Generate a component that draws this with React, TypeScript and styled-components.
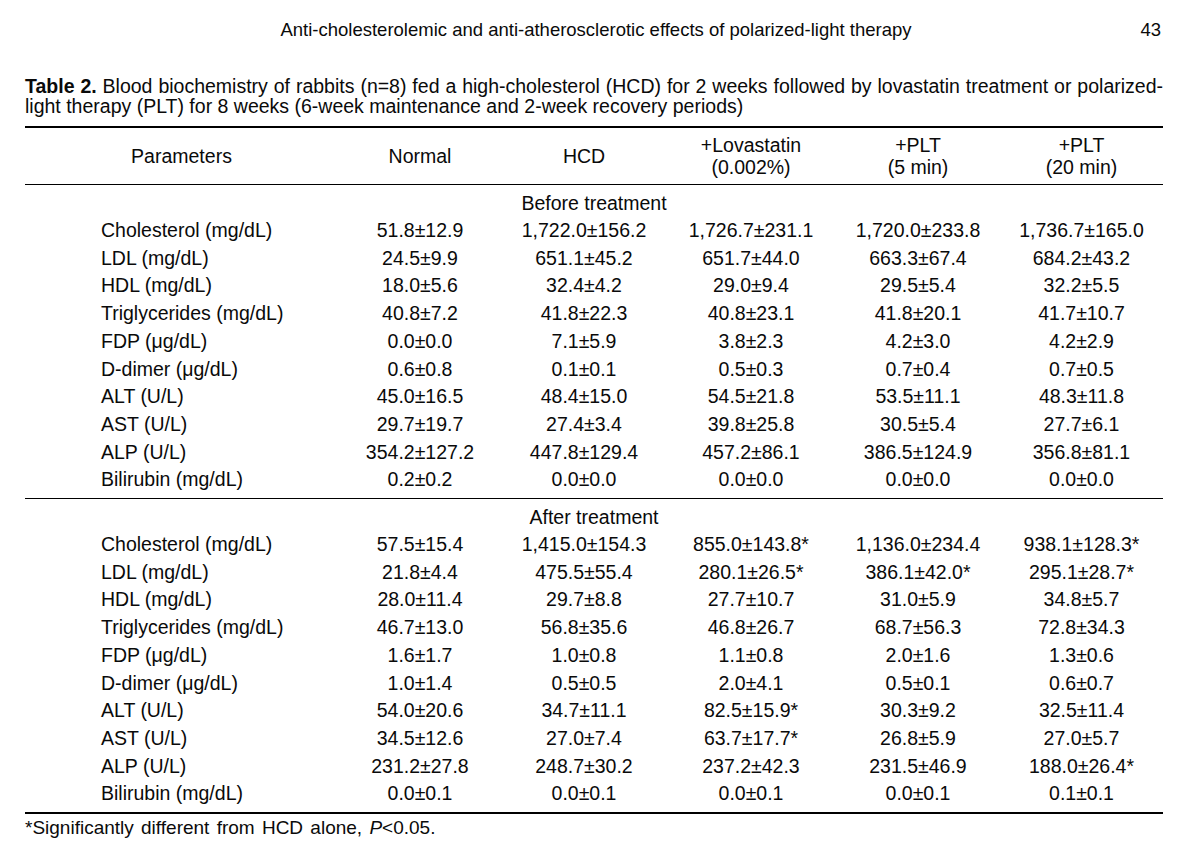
import React from "react";
import styled, { createGlobalStyle } from "styled-components";

const GlobalStyle = createGlobalStyle`
  html, body {
    margin: 0;
    padding: 0;
    background: #ffffff;
  }
  body {
    font-family: "Liberation Sans", Arial, sans-serif;
    color: #0a0a0a;
  }
`;

const Page = styled.div`
  width: 1138px;
  padding: 19px 25px 0 25px;
  font-size: 19.5px;
`;

const RunningHead = styled.header`
  display: grid;
  grid-template-columns: 1fr auto 1fr;
  align-items: center;
  line-height: 22px;
  font-size: 18.5px;
`;

const HeadTitle = styled.span`
  grid-column: 2;
  padding-left: 4px;
`;

const PageNumber = styled.span`
  grid-column: 3;
  justify-self: end;
  padding-right: 2px;
`;

const Caption = styled.div`
  margin-top: 35px;
  line-height: 20px;
`;

const CaptionLine = styled.span<{ $justify?: boolean }>`
  display: block;
  text-align: ${(p) => (p.$justify ? "justify" : "left")};
  text-align-last: ${(p) => (p.$justify ? "justify" : "left")};
`;

const Strong = styled.b`
  font-weight: 700;
`;

const Table = styled.table`
  margin-top: 10px;
  width: 1138px;
  border-collapse: collapse;
  table-layout: fixed;
  border-top: 2.5px solid #000;
  border-bottom: 2.5px solid #000;
`;

const HeadRow = styled.tr`
  border-bottom: 1.3px solid #000;
`;

const HeadCell = styled.th`
  font-weight: 400;
  text-align: center;
  vertical-align: middle;
  height: 56px;
  padding: 0;
  line-height: 22px;
`;

const Section = styled.tbody<{ $divided?: boolean }>`
  border-bottom: ${(p) => (p.$divided ? "1.3px solid #000" : "none")};
`;

const GroupCell = styled.td`
  text-align: center;
  padding: 4px 0 0 0;
  line-height: 28px;
`;

const Row = styled.tr<{ $last?: boolean }>`
  & > td {
    padding-bottom: ${(p) => (p.$last ? "4px" : "0")};
  }
`;

const ParamCell = styled.td`
  padding: 0 0 0 76px;
  line-height: 27.7px;
  text-align: left;
  white-space: nowrap;
`;

const ValueCell = styled.td`
  padding: 0;
  line-height: 27.7px;
  text-align: center;
  white-space: nowrap;
`;

const Footnote = styled.p`
  margin: 3px 0 0 0;
  line-height: 22px;
  font-size: 19px;
  word-spacing: 2px;
`;

type DataRow = [string, string, string, string, string, string];

const before: DataRow[] = [
  ["Cholesterol (mg/dL)", "51.8±12.9", "1,722.0±156.2", "1,726.7±231.1", "1,720.0±233.8", "1,736.7±165.0"],
  ["LDL (mg/dL)", "24.5±9.9", "651.1±45.2", "651.7±44.0", "663.3±67.4", "684.2±43.2"],
  ["HDL (mg/dL)", "18.0±5.6", "32.4±4.2", "29.0±9.4", "29.5±5.4", "32.2±5.5"],
  ["Triglycerides (mg/dL)", "40.8±7.2", "41.8±22.3", "40.8±23.1", "41.8±20.1", "41.7±10.7"],
  ["FDP (μg/dL)", "0.0±0.0", "7.1±5.9", "3.8±2.3", "4.2±3.0", "4.2±2.9"],
  ["D-dimer (μg/dL)", "0.6±0.8", "0.1±0.1", "0.5±0.3", "0.7±0.4", "0.7±0.5"],
  ["ALT (U/L)", "45.0±16.5", "48.4±15.0", "54.5±21.8", "53.5±11.1", "48.3±11.8"],
  ["AST (U/L)", "29.7±19.7", "27.4±3.4", "39.8±25.8", "30.5±5.4", "27.7±6.1"],
  ["ALP (U/L)", "354.2±127.2", "447.8±129.4", "457.2±86.1", "386.5±124.9", "356.8±81.1"],
  ["Bilirubin (mg/dL)", "0.2±0.2", "0.0±0.0", "0.0±0.0", "0.0±0.0", "0.0±0.0"],
];

const after: DataRow[] = [
  ["Cholesterol (mg/dL)", "57.5±15.4", "1,415.0±154.3", "855.0±143.8*", "1,136.0±234.4", "938.1±128.3*"],
  ["LDL (mg/dL)", "21.8±4.4", "475.5±55.4", "280.1±26.5*", "386.1±42.0*", "295.1±28.7*"],
  ["HDL (mg/dL)", "28.0±11.4", "29.7±8.8", "27.7±10.7", "31.0±5.9", "34.8±5.7"],
  ["Triglycerides (mg/dL)", "46.7±13.0", "56.8±35.6", "46.8±26.7", "68.7±56.3", "72.8±34.3"],
  ["FDP (μg/dL)", "1.6±1.7", "1.0±0.8", "1.1±0.8", "2.0±1.6", "1.3±0.6"],
  ["D-dimer (μg/dL)", "1.0±1.4", "0.5±0.5", "2.0±4.1", "0.5±0.1", "0.6±0.7"],
  ["ALT (U/L)", "54.0±20.6", "34.7±11.1", "82.5±15.9*", "30.3±9.2", "32.5±11.4"],
  ["AST (U/L)", "34.5±12.6", "27.0±7.4", "63.7±17.7*", "26.8±5.9", "27.0±5.7"],
  ["ALP (U/L)", "231.2±27.8", "248.7±30.2", "237.2±42.3", "231.5±46.9", "188.0±26.4*"],
  ["Bilirubin (mg/dL)", "0.0±0.1", "0.0±0.1", "0.0±0.1", "0.0±0.1", "0.1±0.1"],
];

const columnWidths = [313, 164, 164, 170, 164, 163];

function SectionBody({ label, rows, divided }: { label: string; rows: DataRow[]; divided?: boolean }) {
  return (
    <Section $divided={divided}>
      <tr>
        <GroupCell colSpan={6}>{label}</GroupCell>
      </tr>
      {rows.map((r, i) => (
        <Row key={r[0]} $last={i === rows.length - 1}>
          <ParamCell>{r[0]}</ParamCell>
          {r.slice(1).map((v, j) => (
            <ValueCell key={j}>{v}</ValueCell>
          ))}
        </Row>
      ))}
    </Section>
  );
}

export default function App() {
  return (
    <>
      <GlobalStyle />
      <Page>
        <RunningHead>
          <HeadTitle>Anti-cholesterolemic and anti-atherosclerotic effects of polarized-light therapy</HeadTitle>
          <PageNumber>43</PageNumber>
        </RunningHead>
        <Caption>
          <CaptionLine $justify>
            <Strong>Table 2.</Strong> Blood biochemistry of rabbits (n=8) fed a high-cholesterol (HCD) for 2 weeks
            followed by lovastatin treatment or polarized-
          </CaptionLine>
          <CaptionLine>light therapy (PLT) for 8 weeks (6-week maintenance and 2-week recovery periods)</CaptionLine>
        </Caption>
        <Table>
          <colgroup>
            {columnWidths.map((w, i) => (
              <col key={i} style={{ width: w }} />
            ))}
          </colgroup>
          <thead>
            <HeadRow>
              <HeadCell>Parameters</HeadCell>
              <HeadCell>Normal</HeadCell>
              <HeadCell>HCD</HeadCell>
              <HeadCell>
                +Lovastatin
                <br />
                (0.002%)
              </HeadCell>
              <HeadCell>
                +PLT
                <br />
                (5 min)
              </HeadCell>
              <HeadCell>
                +PLT
                <br />
                (20 min)
              </HeadCell>
            </HeadRow>
          </thead>
          <SectionBody label="Before treatment" rows={before} divided />
          <SectionBody label="After treatment" rows={after} />
        </Table>
        <Footnote>
          *Significantly different from HCD alone, <i>P</i>&lt;0.05.
        </Footnote>
      </Page>
    </>
  );
}
